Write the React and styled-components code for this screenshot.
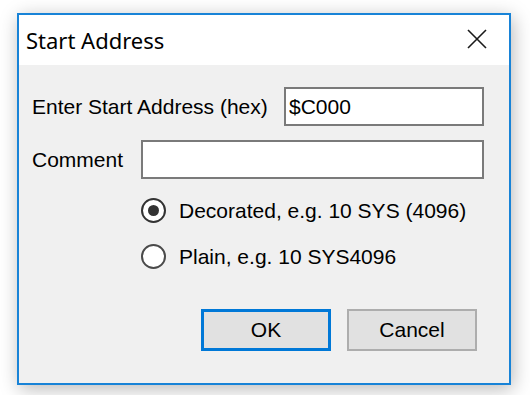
import React, { useState } from 'react';
import styled, { createGlobalStyle } from 'styled-components';

const Global = createGlobalStyle`
  body {
    margin: 0;
    background: #ffffff;
  }
`;

const Page = styled.div`
  width: 530px;
  height: 395px;
  padding: 13px 0 0 17px;
  box-sizing: border-box;
`;

const Window = styled.div`
  width: 494px;
  height: 372px;
  box-sizing: border-box;
  border: 2px solid #1883d7;
  background: #f0f0f0;
  box-shadow: 2px 4px 18px rgba(0, 0, 0, 0.28);
  display: flex;
  flex-direction: column;
`;

const TitleBar = styled.div`
  height: 50px;
  background: #ffffff;
  display: flex;
  align-items: center;
  justify-content: space-between;
  padding: 0 22px 0 7px;
`;

const Title = styled.span`
  font-family: 'Noto Sans', 'Open Sans', sans-serif;
  font-size: 22px;
  color: #000;
  margin-top: -1px;
`;

const CloseBtn = styled.button`
  border: 0;
  background: none;
  padding: 0;
  width: 20px;
  height: 20px;
  display: flex;
  margin-top: -2px;
`;

const Body = styled.div`
  flex: 1;
  padding: 22px 25px 0 13px;
  font-family: 'Liberation Sans', Arial, sans-serif;
  font-size: 21px;
  color: #000;
  display: flex;
  flex-direction: column;
`;

const Row = styled.div`
  display: flex;
  align-items: center;
  margin-bottom: ${p => p.gap || 0}px;
`;

const Label = styled.label`
  flex: 1;
`;

const TextBox = styled.input`
  width: ${p => p.w}px;
  height: 39px;
  box-sizing: border-box;
  border: 2px solid #7a7a7a;
  background: #fff;
  font-family: 'Liberation Sans', Arial, sans-serif;
  font-size: 21px;
  padding: 0 3px;
  outline: none;
  color: #000;
`;

const Options = styled.div`
  display: flex;
  flex-direction: column;
  gap: 21px;
  padding-left: 109px;
  margin-top: 19px;
`;

const Option = styled.label`
  display: flex;
  align-items: center;
  gap: 13px;
  height: 25px;
`;

const RadioCircle = styled.span`
  width: 25px;
  height: 25px;
  flex-shrink: 0;
  box-sizing: border-box;
  border-radius: 50%;
  border: 2px solid ${p => (p.checked ? '#333' : '#4a4a4a')};
  background: #fff;
  display: flex;
  align-items: center;
  justify-content: center;
  &::after {
    content: '';
    width: 11px;
    height: 11px;
    border-radius: 50%;
    background: #333;
    display: ${p => (p.checked ? 'block' : 'none')};
  }
`;

const Buttons = styled.div`
  display: flex;
  justify-content: flex-end;
  gap: 16px;
  margin-top: 40px;
  padding-right: 7px;
`;

const Button = styled.button`
  width: 130px;
  height: 42px;
  box-sizing: border-box;
  background: #e1e1e1;
  border: ${p => (p.primary ? '3px solid #0078d7' : '2px solid #adadad')};
  font-family: 'Liberation Sans', Arial, sans-serif;
  font-size: 21px;
  color: #000;
  padding: 0;
`;

export default function App() {
  const [mode, setMode] = useState('decorated');
  return (
    <Page>
      <Global />
      <Window>
        <TitleBar>
          <Title>Start Address</Title>
          <CloseBtn aria-label="Close">
            <svg width="20" height="20" viewBox="0 0 20 20">
              <path d="M1 1 L19 19 M19 1 L1 19" stroke="#1a1a1a" strokeWidth="1.6" />
            </svg>
          </CloseBtn>
        </TitleBar>
        <Body>
          <Row gap={14}>
            <Label>Enter Start Address (hex)</Label>
            <TextBox w={200} defaultValue="$C000" />
          </Row>
          <Row>
            <Label>Comment</Label>
            <TextBox w={343} />
          </Row>
          <Options>
            <Option onClick={() => setMode('decorated')}>
              <RadioCircle checked={mode === 'decorated'} />
              Decorated, e.g. 10 SYS (4096)
            </Option>
            <Option onClick={() => setMode('plain')}>
              <RadioCircle checked={mode === 'plain'} />
              Plain, e.g. 10 SYS4096
            </Option>
          </Options>
          <Buttons>
            <Button primary>OK</Button>
            <Button>Cancel</Button>
          </Buttons>
        </Body>
      </Window>
    </Page>
  );
}
